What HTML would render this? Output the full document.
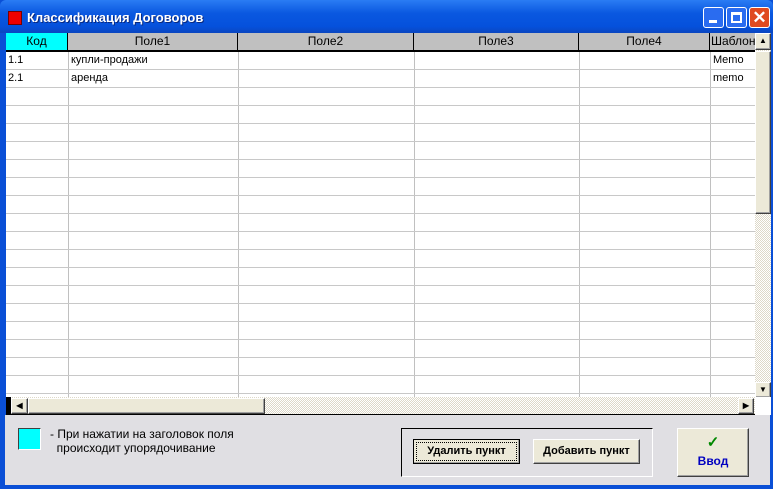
<!DOCTYPE html><html><head><style>
*{margin:0;padding:0;box-sizing:border-box}
body{width:773px;height:489px;overflow:hidden;background:#0a4fd6;font-family:"Liberation Sans",sans-serif;position:relative}
.abs{position:absolute}
#title{left:0;top:0;width:773px;height:33px;background:linear-gradient(#2a7cf4,#0a58e0 40%,#0551dc 80%,#0a46c0);border-radius:6px 6px 0 0}
#grid{left:6px;top:33px;width:749px;height:364px;background:#fff;overflow:hidden}
.hd{position:absolute;top:0;height:19px;background:#c0c0c0;border-right:1px solid #000;border-bottom:2px solid #000;font-size:12px;text-align:center;line-height:17px}
.vl{position:absolute;top:19px;width:1px;height:345px;background:#c0c0c0}
.hl{position:absolute;left:0;width:749px;height:1px;background:#c8c8c8}
.c{position:absolute;font-size:11px;line-height:17px}
.btn{position:absolute;background:#ece9d8;border:1px solid;border-color:#fff #404040 #404040 #fff;box-shadow:inset -1px -1px #a0a0a0;font-size:11px;font-weight:bold;text-align:center}
</style></head><body>
<div id="title" class="abs"></div>
<div class="abs" style="left:8px;top:11px;width:14px;height:14px;background:#e00;border:1px solid #700"></div>
<div class="abs" style="left:27px;top:10px;color:#fff;font-weight:bold;font-size:13px;text-shadow:1px 1px #0a2a80">Классификация Договоров</div>
<div class="abs" style="left:703px;top:7px;width:21px;height:21px;border:1px solid #fff;border-radius:3px;background:#2a6cf0"><div class="abs" style="left:5px;top:12px;width:8px;height:3px;background:#fff"></div></div>
<div class="abs" style="left:726px;top:7px;width:21px;height:21px;border:1px solid #fff;border-radius:3px;background:#2a6cf0"><div class="abs" style="left:4px;top:4px;width:11px;height:11px;border:2px solid #fff;border-top-width:3px"></div></div>
<div class="abs" style="left:749px;top:7px;width:21px;height:21px;border:1px solid #fff;border-radius:3px;background:#e04a20;color:#fff;font-size:17px;font-weight:bold;text-align:center;line-height:19px">✕</div>
<div id="grid" class="abs">
<div class="hd" style="left:0;width:62px;background:#00ffff">Код</div>
<div class="hd" style="left:62px;width:170px">Поле1</div>
<div class="hd" style="left:232px;width:176px">Поле2</div>
<div class="hd" style="left:408px;width:165px">Поле3</div>
<div class="hd" style="left:573px;width:131px">Поле4</div>
<div class="hd" style="left:704px;width:50px;text-align:left;padding-left:1px">Шаблон</div>
<div class="vl" style="left:62px"></div><div class="vl" style="left:232px"></div><div class="vl" style="left:408px"></div><div class="vl" style="left:573px"></div><div class="vl" style="left:704px"></div>
<div class="c" style="left:2px;top:19px">1.1</div><div class="c" style="left:65px;top:19px">купли-продажи</div><div class="c" style="left:707px;top:19px">Memo</div>
<div class="c" style="left:2px;top:37px">2.1</div><div class="c" style="left:65px;top:37px">аренда</div><div class="c" style="left:707px;top:37px">memo</div>
<div id="hls"></div>
</div>
<script>
var h='';for(var y=36;y<364;y+=18)h+='<div class="hl" style="top:'+y+'px"></div>';document.getElementById('hls').innerHTML=h;
</script>
<div class="abs" style="left:755px;top:33px;width:16px;height:364px;background:repeating-conic-gradient(#fff 0 25%,#ddd8c8 0 50%) 0 0/2px 2px"></div>
<div class="btn" style="left:755px;top:33px;width:16px;height:17px;font-size:8px;line-height:14px">▲</div>
<div class="btn" style="left:755px;top:51px;width:16px;height:163px"></div>
<div class="btn" style="left:755px;top:382px;width:16px;height:16px;font-size:8px;line-height:14px">▼</div>
<div class="abs" style="left:6px;top:397px;width:749px;height:18px;background:repeating-conic-gradient(#fff 0 25%,#ddd8c8 0 50%) 0 0/2px 2px;border-bottom:1px solid #000"></div>
<div class="abs" style="left:6px;top:397px;width:5px;height:17px;background:#000"></div>
<div class="btn" style="left:11px;top:398px;width:17px;height:16px;font-size:8px;line-height:14px">◀</div>
<div class="btn" style="left:28px;top:398px;width:237px;height:16px"></div>
<div class="btn" style="left:738px;top:398px;width:16px;height:16px;font-size:8px;line-height:14px">▶</div>
<div class="abs" style="left:755px;top:397px;width:16px;height:18px;background:#fff"></div>
<div class="abs" style="left:5px;top:415px;width:765px;height:70px;background:#e0dfe3"></div>
<div class="abs" style="left:18px;top:428px;width:23px;height:22px;background:#00ffff;border:1px solid;border-color:#404040 #fff #fff #404040"></div>
<div class="abs" style="left:50px;top:427px;font-size:12px;line-height:14px">- При нажатии на заголовок поля<br>&nbsp; происходит упорядочивание</div>
<div class="abs" style="left:401px;top:428px;width:252px;height:49px;border:1px solid;border-color:#000 #fff #fff #000"></div>
<div class="btn" style="left:413px;top:439px;width:107px;height:25px;line-height:23px;border:1px solid #000;outline:1px dotted #000;outline-offset:-4px">Удалить пункт</div>
<div class="btn" style="left:533px;top:439px;width:107px;height:25px;line-height:23px">Добавить пункт</div>
<div class="btn" style="left:677px;top:428px;width:72px;height:49px;font-size:12px"><div style="color:#080;font-size:15px;margin-top:7px;line-height:14px">✓</div><div style="color:#0000c0;margin-top:4px">Ввод</div></div>
</body></html>
